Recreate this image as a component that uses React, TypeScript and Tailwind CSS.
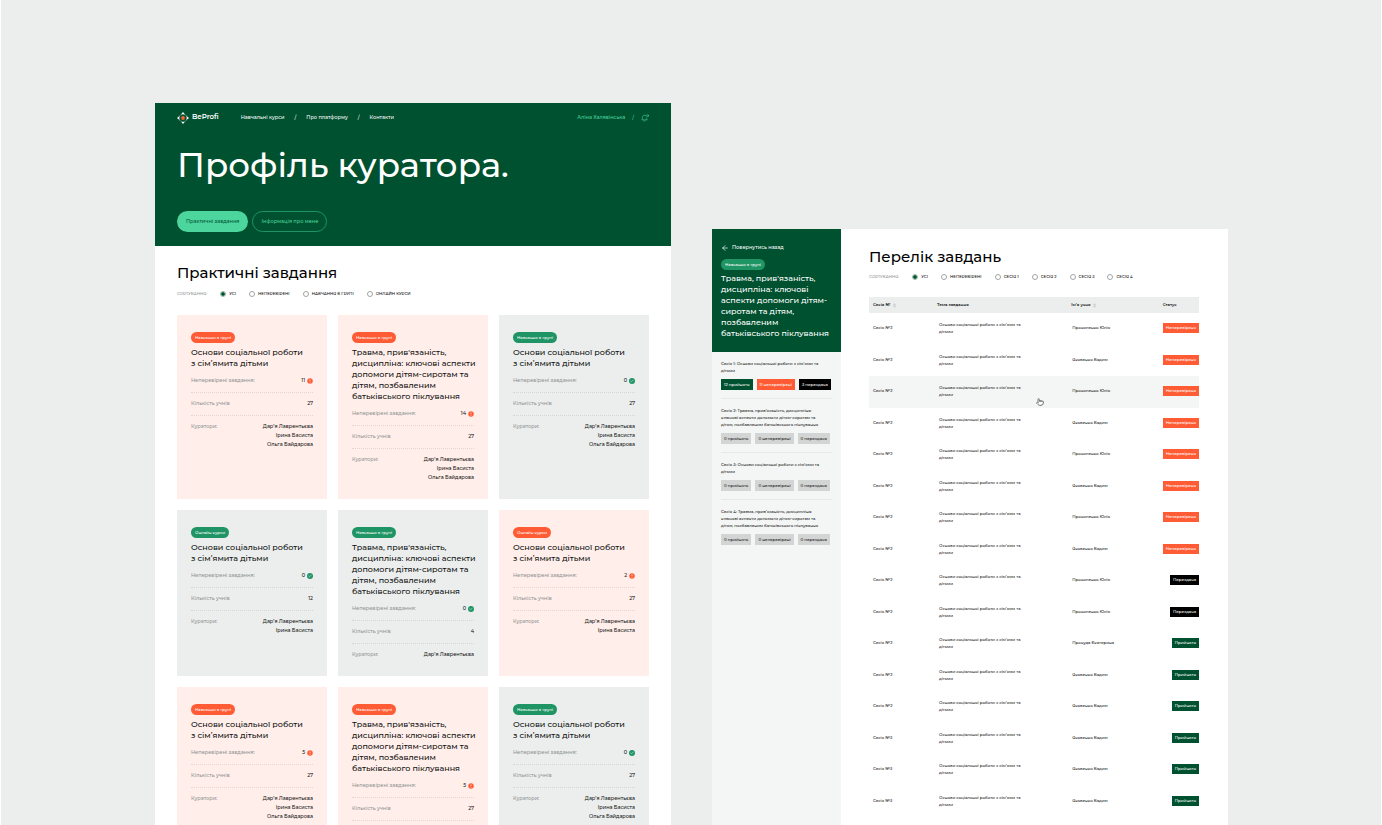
import { useState } from 'react'
import { ArrowLeft, Check, Pointer } from 'lucide-react'

type Tone = 'orange' | 'green'

interface Course {
  tag: string
  tone: Tone
  title: 'short' | 'long'
  pending: number
  students: number
  curators: string[]
}

const TITLES = {
  short: ['Основи соціальної роботи', 'з сім’ямита дітьми'],
  long: [
    "Травма, прив'язаність,",
    'дисципліна: ключові аспекти',
    'допомоги дітям-сиротам та',
    'дітям, позбавленим',
    'батьківського піклування',
  ],
}

const ALL = ['Дар’я Лаврентьєва', 'Ірина Басиста', 'Ольга Байдарова']

const COURSES: Course[] = [
  { tag: 'Навчання в групі', tone: 'orange', title: 'short', pending: 11, students: 27, curators: ALL },
  { tag: 'Навчання в групі', tone: 'orange', title: 'long', pending: 14, students: 27, curators: ALL },
  { tag: 'Навчання в групі', tone: 'green', title: 'short', pending: 0, students: 27, curators: ALL },
  { tag: 'Онлайн курси', tone: 'green', title: 'short', pending: 0, students: 12, curators: ALL.slice(0, 2) },
  { tag: 'Навчання в групі', tone: 'green', title: 'long', pending: 0, students: 4, curators: ALL.slice(0, 1) },
  { tag: 'Онлайн курси', tone: 'orange', title: 'short', pending: 2, students: 27, curators: ALL.slice(0, 2) },
  { tag: 'Навчання в групі', tone: 'orange', title: 'short', pending: 5, students: 27, curators: ALL },
  { tag: 'Навчання в групі', tone: 'orange', title: 'long', pending: 5, students: 27, curators: ALL },
  { tag: 'Навчання в групі', tone: 'green', title: 'short', pending: 0, students: 27, curators: ALL },
]

const SHORT_SESSION = ['Основи соціальної роботи з сім’ями та', 'дітьми']
const LONG_SESSION = ['Травма, прив’язаність, дисципліна:', 'ключові аспекти допомоги дітям-сиротам та', 'дітям, позбавленим батьківського піклування']

const SESSIONS = [
  { lines: SHORT_SESSION, counts: [12, 11, 3] },
  { lines: LONG_SESSION, counts: [0, 0, 0] },
  { lines: SHORT_SESSION, counts: [0, 0, 0] },
  { lines: LONG_SESSION, counts: [0, 0, 0] },
]

const COUNT_LABELS = ['прийнято', 'неперевірені', 'перездача']
const COUNT_STYLES = ['bg-[#00512f] text-white', 'bg-[#ff5c35] text-white', 'bg-black text-white']

type Status = 'Неперевірено' | 'Перездача' | 'Прийнято'

const STATUS_STYLES: Record<Status, string> = {
  Неперевірено: 'bg-[#ff5c35]',
  Перездача: 'bg-black',
  Прийнято: 'bg-[#00512f]',
}

const TASKS: { session: string; student: string; status: Status }[] = [
  { session: 'Сесія №2', student: 'Прокопенко Юлія', status: 'Неперевірено' },
  { session: 'Сесія №2', student: 'Яковенко Вадим', status: 'Неперевірено' },
  { session: 'Сесія №2', student: 'Прокопенко Юлія', status: 'Неперевірено' },
  { session: 'Сесія №2', student: 'Яковенко Вадим', status: 'Неперевірено' },
  { session: 'Сесія №2', student: 'Прокопенко Юлія', status: 'Неперевірено' },
  { session: 'Сесія №2', student: 'Яковенко Вадим', status: 'Неперевірено' },
  { session: 'Сесія №2', student: 'Прокопенко Юлія', status: 'Неперевірено' },
  { session: 'Сесія №2', student: 'Яковенко Вадим', status: 'Неперевірено' },
  { session: 'Сесія №2', student: 'Прокопенко Юлія', status: 'Перездача' },
  { session: 'Сесія №2', student: 'Прокопенко Юлія', status: 'Перездача' },
  { session: 'Сесія №2', student: 'Прокуда Єкатерина', status: 'Прийнято' },
  { session: 'Сесія №2', student: 'Яковенко Вадим', status: 'Прийнято' },
  { session: 'Сесія №2', student: 'Яковенко Вадим', status: 'Прийнято' },
  { session: 'Сесія №3', student: 'Яковенко Вадим', status: 'Прийнято' },
  { session: 'Сесія №3', student: 'Яковенко Вадим', status: 'Прийнято' },
  { session: 'Сесія №3', student: 'Яковенко Вадим', status: 'Прийнято' },
]

const ACTIVE_ROW = 2

function Logo() {
  return (
    <a href="#" className="flex items-center gap-[3px] text-[7px] font-semibold text-white">
      <svg viewBox="0 0 24 24" className="size-3">
        <path d="M12 0l4.500 5.500q-4.500-2-9 0zM24 12l-5.500 4.500q2-4.500 0-9zM12 24l-4.500-5.500q4.500 2 9 0zM0 12l5.500-4.500q-2 4.500 0 9z" fill="#fff" />
        <path d="M5.500 7.500l2-2M18.500 7.500l-2-2M5.500 16.500l2 2M18.500 16.500l-2 2" stroke="#fff" strokeWidth="1" />
        <circle cx="12" cy="12" r="3.800" fill="#ff5c35" />
      </svg>
      BeProfi
    </a>
  )
}

function BellIcon() {
  return (
    <svg viewBox="0 0 16 16" className="size-2" fill="none" stroke="#4cd69e" strokeWidth="1.200" strokeLinecap="round">
      <path d="M10 3.200A4.300 4.300 0 0 0 3 6.700c0 2.800-.8 4-1.500 5h11c-.6-.9-1.200-1.900-1.400-3.700" />
      <path d="M5.500 13.500a1.800 1.800 0 0 0 3 0" />
      <circle cx="13.200" cy="3.400" r="1.900" />
    </svg>
  )
}

function SortIcon() {
  return (
    <svg viewBox="0 0 6 10" className="h-[5px] w-[3px]" fill="none" stroke="#a9acab" strokeWidth="0.700">
      <path d="M1 4l2-3 2 3zM1 6l2 3 2-3z" />
    </svg>
  )
}

function Filter({ name, options }: { name: string; options: string[] }) {
  const [value, setValue] = useState(options[0])

  return (
    <fieldset className="flex h-2 items-center gap-[13px] text-[4px] font-medium whitespace-nowrap uppercase text-black">
      <span className="text-[#8f9291]">Сортування:</span>
      {options.map(o => (
        <label key={o} className="flex items-center gap-[3px]">
          <input
            type="radio"
            name={name}
            checked={value === o}
            onChange={() => setValue(o)}
            className="size-[6px] appearance-none rounded-full border border-[#a3a6a5] bg-clip-content checked:border-[#8fb5a2] checked:bg-[#00512f]"
          />
          {o}
        </label>
      ))}
    </fieldset>
  )
}

function Tag({ tone, children }: { tone: Tone; children: string }) {
  return (
    <span
      className={`flex h-[11px] w-fit items-center rounded-full px-[4px] text-[4px] text-white ${tone === 'orange' ? 'bg-[#ff5c35]' : 'bg-[#1f9464]'}`}
    >
      {children}
    </span>
  )
}

function CourseCard({ course }: { course: Course }) {
  const orange = course.tone === 'orange'

  return (
    <article className={`px-[14px] py-[17px] text-[5px] font-medium ${orange ? 'bg-[#ffeeea]' : 'bg-[#ebeeed]'}`}>
      <Tag tone={course.tone}>{course.tag}</Tag>
      <h3 className="mt-1 text-[8px] leading-[11px] font-medium whitespace-nowrap text-[#111]">
        {TITLES[course.title].map(line => <span key={line} className="block">{line}</span>)}
      </h3>
      <dl className="pt-px">
        <div className="flex h-[23px] items-center justify-between border-b border-dotted border-black/10">
          <dt className="text-[#8f9291]">Неперевірені завдання:</dt>
          <dd className="flex items-center gap-[2px]">
            {course.pending}
            {orange ? (
              <svg viewBox="0 0 12 12" className="size-[6px]">
                <circle cx="6" cy="6" r="5.500" fill="#ff5c35" />
                <path d="M6 3v3.500M6 8.200v1.200" stroke="#fff" strokeWidth="1.300" />
              </svg>
            ) : (
              <span className="flex size-[6px] items-center justify-center rounded-full bg-[#1f9464]">
                <Check size={4} strokeWidth={3} className="text-white" />
              </span>
            )}
          </dd>
        </div>
        <div className="flex h-[23px] items-center justify-between border-b border-dotted border-black/10">
          <dt className="text-[#8f9291]">Кількість учнів</dt>
          <dd>{course.students}</dd>
        </div>
        <div className="flex justify-between pt-[6px] leading-[9px]">
          <dt className="text-[#8f9291]">Куратори:</dt>
          <dd className="text-right">
            {course.curators.map(c => <div key={c}>{c}</div>)}
          </dd>
        </div>
      </dl>
    </article>
  )
}

function CuratorPage() {
  return (
    <section className="bg-white">
      <header className="bg-[#00512f] px-[22px] pt-2 pb-[14px]">
        <nav className="flex h-[13px] items-center text-[5px] font-medium text-white">
          <Logo />
          <div className="ml-[22px] flex items-center gap-[10px]">
            <a href="#">Навчальні курси</a>
            <span>/</span>
            <a href="#">Про платформу</a>
            <span>/</span>
            <a href="#">Контакти</a>
          </div>
          <div className="ml-auto flex items-center gap-[7px] text-[#4cd69e]">
            <a href="#">Аліна Халявінська</a>
            <span>/</span>
            <button aria-label="Сповіщення"><BellIcon /></button>
          </div>
        </nav>
        <h1 className="mt-[19px] text-[34px] leading-[44px] font-medium whitespace-nowrap text-white">Профіль куратора.</h1>
        <div className="mt-6 flex gap-1 text-[5px] font-medium">
          <button className="h-[21px] rounded-full bg-[#4cd69e] px-[9px] text-[#00512f]">Практичні завдання</button>
          <button className="h-[21px] rounded-full border border-[#1f9464] px-2 text-[#4cd69e]">Інформація про мене</button>
        </div>
      </header>
      <div className="px-[22px] pt-4">
        <h2 className="text-[15px] leading-[22px] font-medium text-black">Практичні завдання</h2>
        <div className="mt-[6px]">
          <Filter name="course-filter" options={['Усі', 'Неперевірені', 'Навчання в групі', 'Онлайн курси']} />
        </div>
        <div className="mt-[17px] grid grid-cols-3 gap-[11px]">
          {COURSES.map((c, i) => <CourseCard key={i} course={c} />)}
        </div>
      </div>
    </section>
  )
}

function Sidebar() {
  return (
    <aside className="w-1/4 shrink-0 bg-[#f4f6f5] font-medium">
      <div className="bg-[#00512f] px-[9px] pt-[14px] pb-[13px] text-white">
        <a href="#" className="flex h-[10px] items-center gap-[3px] text-[5px]">
          <ArrowLeft size={8} strokeWidth={2} />
          Повернутись назад
        </a>
        <div className="mt-[6px]">
          <Tag tone="green">Навчання в групі</Tag>
        </div>
        <h2 className="mt-[3px] text-[8px] leading-[11px] whitespace-nowrap">
          Травма, прив'язаність,<br />
          дисципліна: ключові<br />
          аспекти допомоги дітям-<br />
          сиротам та дітям,<br />
          позбавленим<br />
          батьківського піклування
        </h2>
      </div>
      <ul className="px-[9px]">
        {SESSIONS.map((s, i) => (
          <li key={i} className="border-b border-black/5 py-2 last:border-b-0">
            <p className="text-[4px] leading-[7px] whitespace-nowrap">
              Сесія {i + 1}: {s.lines.map((l, n) => <span key={l}>{n > 0 && <br />}{l}</span>)}
            </p>
            <div className="mt-[5px] flex gap-1 text-[4px] leading-[11px] whitespace-nowrap">
              {s.counts.map((count, n) => (
                <span key={n} className={`px-[3px] ${count ? COUNT_STYLES[n] : 'bg-[#d3d5d4]'}`}>
                  {count} {COUNT_LABELS[n]}
                </span>
              ))}
            </div>
          </li>
        ))}
      </ul>
    </aside>
  )
}

function TaskTable() {
  return (
    <table className="mt-4 w-full table-fixed text-left text-[4px] font-medium">
      <thead className="bg-[#ebeeed]">
        <tr className="h-4">
          <th className="w-[20%] pl-1 font-semibold">
            <span className="flex items-center gap-[3px]">Сесія № <SortIcon /></span>
          </th>
          <th className="w-[41%] pl-[2px] font-semibold">Тема завдання</th>
          <th className="w-[28%] pl-px font-semibold">
            <span className="flex items-center gap-[3px]">Ім’я учня <SortIcon /></span>
          </th>
          <th className="w-[11%] font-semibold">Статус</th>
        </tr>
      </thead>
      <tbody>
        {TASKS.map((t, i) => (
          <tr key={i} className={`odd:h-8 even:h-[31px] ${i === ACTIVE_ROW ? 'bg-[#f4f6f5]' : ''}`}>
            <td className="pb-[2px] pl-1">{t.session}</td>
            <td className="relative pb-[2px] pl-1 leading-[7px]">
              Основи соціальної роботи з сім’ями та<br />дітьми
              {i === ACTIVE_ROW && (
                <Pointer size={8} strokeWidth={2} className="absolute right-[26px] bottom-[2px] fill-white text-[#444]" />
              )}
            </td>
            <td className="pb-[2px] pl-[2px]">{t.student}</td>
            <td className="pb-[2px]">
              <span className={`ml-auto block w-fit px-[3px] leading-[10px] text-white ${STATUS_STYLES[t.status]}`}>
                {t.status}
              </span>
            </td>
          </tr>
        ))}
      </tbody>
    </table>
  )
}

function TasksPage() {
  return (
    <section className="mt-[126px] flex bg-white">
      <Sidebar />
      <main className="min-w-0 flex-1 pt-[17px] pr-[29px] pl-7">
        <h2 className="text-[15px] leading-[22px] font-medium text-black">Перелік завдань</h2>
        <div className="mt-[5px]">
          <Filter name="task-filter" options={['Усі', 'Неперевірені', 'Сесія 1', 'Сесія 2', 'Сесія 3', 'Сесія 4']} />
        </div>
        <TaskTable />
      </main>
    </section>
  )
}

export default function App() {
  return (
    <div className="grid h-screen grid-cols-2 gap-[41px] overflow-hidden border-x border-white bg-[#ebeeed] pt-[103px] pr-[153px] pl-[154px] font-['Montserrat','Inter',sans-serif] text-[#111]">
      <CuratorPage />
      <TasksPage />
    </div>
  )
}
